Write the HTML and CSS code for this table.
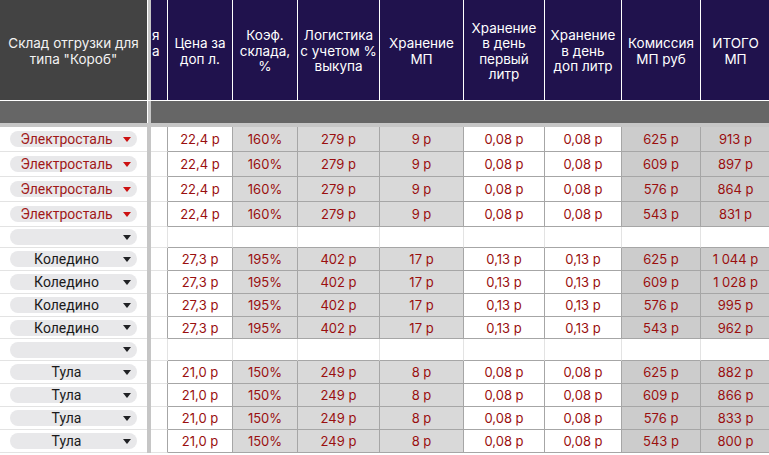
FILE: index.html
```html
<!DOCTYPE html>
<html lang="ru">
<head>
<meta charset="utf-8">
<title>Склад</title>
<link rel="stylesheet" href="styles.css">
</head>
<body>
<div class="sheet">
  <div class="row head">
    <div class="c hA">Склад отгрузки для<br>типа "Короб"</div>
    <div class="dv"></div>
    <div class="c hN hB">я<br>а<br>&nbsp;</div>
    <div class="c hN">Цена за<br>доп л.</div>
    <div class="c hN">Коэф.<br>склада,<br>%</div>
    <div class="c hN">Логистика<br>с учетом %<br>выкупа</div>
    <div class="c hN">Хранение<br>МП</div>
    <div class="c hN lh4">Хранение<br>в день<br>первый<br>литр</div>
    <div class="c hN">Хранение<br>в день<br>доп литр</div>
    <div class="c hN">Комиссия<br>МП руб</div>
    <div class="c hN">ИТОГО<br>МП</div>
  </div>
  <div class="band"><div class="bA"></div><div class="dv"></div><div class="bR"></div></div>
  <div class="hdiv"></div>

  <!-- Электросталь -->
  <div class="row d h25">
    <div class="cA"><div class="chip red"><span class="lbl">Электросталь</span><svg class="arr" viewBox="0 0 8 5"><path d="M0 0H8L4 5Z"/></svg></div></div>
    <div class="dv"></div><div class="cB"></div>
    <div class="c w">22,4 р</div><div class="c g">160%</div><div class="c g">279 р</div><div class="c g">9 р</div><div class="c w">0,08 р</div><div class="c w">0,08 р</div><div class="c g2">625 р</div><div class="c g2">913 р</div>
  </div>
  <div class="row d h25">
    <div class="cA"><div class="chip red"><span class="lbl">Электросталь</span><svg class="arr" viewBox="0 0 8 5"><path d="M0 0H8L4 5Z"/></svg></div></div>
    <div class="dv"></div><div class="cB"></div>
    <div class="c w">22,4 р</div><div class="c g">160%</div><div class="c g">279 р</div><div class="c g">9 р</div><div class="c w">0,08 р</div><div class="c w">0,08 р</div><div class="c g2">609 р</div><div class="c g2">897 р</div>
  </div>
  <div class="row d h25">
    <div class="cA"><div class="chip red"><span class="lbl">Электросталь</span><svg class="arr" viewBox="0 0 8 5"><path d="M0 0H8L4 5Z"/></svg></div></div>
    <div class="dv"></div><div class="cB"></div>
    <div class="c w">22,4 р</div><div class="c g">160%</div><div class="c g">279 р</div><div class="c g">9 р</div><div class="c w">0,08 р</div><div class="c w">0,08 р</div><div class="c g2">576 р</div><div class="c g2">864 р</div>
  </div>
  <div class="row d h25">
    <div class="cA"><div class="chip red"><span class="lbl">Электросталь</span><svg class="arr" viewBox="0 0 8 5"><path d="M0 0H8L4 5Z"/></svg></div></div>
    <div class="dv"></div><div class="cB"></div>
    <div class="c w">22,4 р</div><div class="c g">160%</div><div class="c g">279 р</div><div class="c g">9 р</div><div class="c w">0,08 р</div><div class="c w">0,08 р</div><div class="c g2">543 р</div><div class="c g2">831 р</div>
  </div>

  <div class="row e h21">
    <div class="cA"><div class="chip"><span class="lbl"></span><svg class="arr" viewBox="0 0 8 5"><path d="M0 0H8L4 5Z"/></svg></div></div>
    <div class="dv"></div><div class="cB"></div>
    <div class="c"></div><div class="c"></div><div class="c"></div><div class="c"></div><div class="c"></div><div class="c"></div><div class="c"></div><div class="c"></div>
  </div>

  <!-- Коледино -->
  <div class="row d h23">
    <div class="cA"><div class="chip"><span class="lbl">Коледино</span><svg class="arr" viewBox="0 0 8 5"><path d="M0 0H8L4 5Z"/></svg></div></div>
    <div class="dv"></div><div class="cB"></div>
    <div class="c w">27,3 р</div><div class="c g">195%</div><div class="c g">402 р</div><div class="c g">17 р</div><div class="c w">0,13 р</div><div class="c w">0,13 р</div><div class="c g2">625 р</div><div class="c g2">1 044 р</div>
  </div>
  <div class="row d h23">
    <div class="cA"><div class="chip"><span class="lbl">Коледино</span><svg class="arr" viewBox="0 0 8 5"><path d="M0 0H8L4 5Z"/></svg></div></div>
    <div class="dv"></div><div class="cB"></div>
    <div class="c w">27,3 р</div><div class="c g">195%</div><div class="c g">402 р</div><div class="c g">17 р</div><div class="c w">0,13 р</div><div class="c w">0,13 р</div><div class="c g2">609 р</div><div class="c g2">1 028 р</div>
  </div>
  <div class="row d h23">
    <div class="cA"><div class="chip"><span class="lbl">Коледино</span><svg class="arr" viewBox="0 0 8 5"><path d="M0 0H8L4 5Z"/></svg></div></div>
    <div class="dv"></div><div class="cB"></div>
    <div class="c w">27,3 р</div><div class="c g">195%</div><div class="c g">402 р</div><div class="c g">17 р</div><div class="c w">0,13 р</div><div class="c w">0,13 р</div><div class="c g2">576 р</div><div class="c g2">995 р</div>
  </div>
  <div class="row d h22">
    <div class="cA"><div class="chip"><span class="lbl">Коледино</span><svg class="arr" viewBox="0 0 8 5"><path d="M0 0H8L4 5Z"/></svg></div></div>
    <div class="dv"></div><div class="cB"></div>
    <div class="c w">27,3 р</div><div class="c g">195%</div><div class="c g">402 р</div><div class="c g">17 р</div><div class="c w">0,13 р</div><div class="c w">0,13 р</div><div class="c g2">543 р</div><div class="c g2">962 р</div>
  </div>

  <div class="row e h22">
    <div class="cA"><div class="chip"><span class="lbl"></span><svg class="arr" viewBox="0 0 8 5"><path d="M0 0H8L4 5Z"/></svg></div></div>
    <div class="dv"></div><div class="cB"></div>
    <div class="c"></div><div class="c"></div><div class="c"></div><div class="c"></div><div class="c"></div><div class="c"></div><div class="c"></div><div class="c"></div>
  </div>

  <!-- Тула -->
  <div class="row d h23">
    <div class="cA"><div class="chip"><span class="lbl">Тула</span><svg class="arr" viewBox="0 0 8 5"><path d="M0 0H8L4 5Z"/></svg></div></div>
    <div class="dv"></div><div class="cB"></div>
    <div class="c w">21,0 р</div><div class="c g">150%</div><div class="c g">249 р</div><div class="c g">8 р</div><div class="c w">0,08 р</div><div class="c w">0,08 р</div><div class="c g2">625 р</div><div class="c g2">882 р</div>
  </div>
  <div class="row d h23">
    <div class="cA"><div class="chip"><span class="lbl">Тула</span><svg class="arr" viewBox="0 0 8 5"><path d="M0 0H8L4 5Z"/></svg></div></div>
    <div class="dv"></div><div class="cB"></div>
    <div class="c w">21,0 р</div><div class="c g">150%</div><div class="c g">249 р</div><div class="c g">8 р</div><div class="c w">0,08 р</div><div class="c w">0,08 р</div><div class="c g2">609 р</div><div class="c g2">866 р</div>
  </div>
  <div class="row d h23">
    <div class="cA"><div class="chip"><span class="lbl">Тула</span><svg class="arr" viewBox="0 0 8 5"><path d="M0 0H8L4 5Z"/></svg></div></div>
    <div class="dv"></div><div class="cB"></div>
    <div class="c w">21,0 р</div><div class="c g">150%</div><div class="c g">249 р</div><div class="c g">8 р</div><div class="c w">0,08 р</div><div class="c w">0,08 р</div><div class="c g2">576 р</div><div class="c g2">833 р</div>
  </div>
  <div class="row d h23">
    <div class="cA"><div class="chip"><span class="lbl">Тула</span><svg class="arr" viewBox="0 0 8 5"><path d="M0 0H8L4 5Z"/></svg></div></div>
    <div class="dv"></div><div class="cB"></div>
    <div class="c w">21,0 р</div><div class="c g">150%</div><div class="c g">249 р</div><div class="c g">8 р</div><div class="c w">0,08 р</div><div class="c w">0,08 р</div><div class="c g2">543 р</div><div class="c g2">800 р</div>
  </div>
</div>
</body>
</html>
```
FILE: styles.css
```css
* { box-sizing: border-box; }
html, body { margin: 0; padding: 0; background: #fff; overflow: hidden; }
body { font-family: Inter, "Noto Sans", sans-serif; width: 769px; height: 455px; }

.sheet { width: 769px; overflow: hidden; }

.row {
  display: grid;
  grid-template-columns: 147px 4px 17px 65px 65px 82px 84px 81px 77px 79px 70px;
}

.dv { background: #c6c6c6; }

/* header */
.head { height: 101px; }
.head .dv { border-left: 1px solid #fff; border-bottom: 1px solid #fff; }
.head .c {
  display: flex;
  align-items: center;
  justify-content: center;
  text-align: center;
  color: #fff;
  font-size: 13.5px;
  line-height: 15.8px;
  padding-top: 3px;
  white-space: nowrap;
  border-right: 1px solid #fff;
  border-bottom: 1px solid #fff;
  overflow: hidden;
}
.head .lh4 { line-height: 15.3px; }
.hA { background: #434343; border-right: none !important; color: #f2f2f2 !important; }
.hN { background: #20124d; }
.head .hB { justify-content: flex-start; text-align: left; padding-left: 1px; }

.band {
  display: grid;
  grid-template-columns: 147px 4px 1fr;
  height: 22px;
}
.band .bA, .band .bR { background: #666666; }
.band .dv { border-left: 1px solid #fff; }
.hdiv { height: 4px; background: #c6c6c6; }

/* body rows */
.h25 { height: 25px; }
.h23 { height: 23px; }
.h22 { height: 22px; }
.h21 { height: 21px; }

.cA {
  display: flex;
  align-items: center;
  padding-left: 10px;
  border-bottom: 1px solid #e3e3e3;
  background: #fff;
}
.cB {
  background: #fff;
  border-bottom: 1px solid #e3e3e3;
  border-right: 1px solid #a6a6a6;
}
.e .cB { border-right-color: #e3e3e3; }

.d .c {
  display: flex;
  align-items: center;
  justify-content: center;
  font-size: 13px;
  color: #9a0f0f;
  white-space: nowrap;
  border-right: 1px solid #a6a6a6;
  border-bottom: 1px solid #a6a6a6;
}
.e .c {
  background: #fff;
  border-right: 1px solid #e3e3e3;
  border-bottom: 1px solid #a6a6a6;
}
.w { background: #fff; }
.g { background: #d9d9d9; }
.g2 { background: #cccccc; }

/* chips */
.chip {
  width: 127px;
  height: 16px;
  border-radius: 8px;
  background: #e8e8ea;
  display: flex;
  align-items: center;
  padding-right: 6px;
  font-family: Roboto, "Noto Sans", sans-serif;
  font-size: 14px;
  color: #1a1a1a;
  font-weight: 400;
}
.chip .lbl { flex: 1; text-align: center; white-space: nowrap; line-height: 16px; }
.chip .arr { width: 8px; height: 5px; fill: #202124; flex: none; }
.chip.red { color: #a01818; }
.chip.red .arr { fill: #cc1111; }
```
